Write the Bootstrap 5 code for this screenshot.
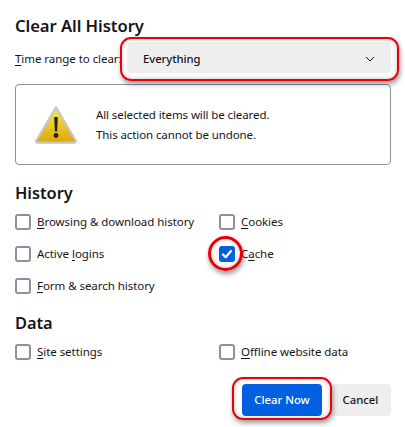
<!DOCTYPE html>
<html lang="en">
<head>
<meta charset="utf-8">
<title>Clear All History</title>
<link rel="stylesheet" href="https://cdn.jsdelivr.net/npm/bootstrap@5.3.0/dist/css/bootstrap.min.css">
<style>
html,body{background:#fff;overflow:hidden}
body{position:relative;width:405px;height:427px;font-family:"Noto Sans","Liberation Sans",sans-serif;font-size:11.5px;letter-spacing:-.05px;color:#15141a;line-height:16px}
u{text-underline-offset:2px;text-decoration-thickness:1px}
.dlg{padding:17px 14px 0 15px}
.dlg-title{font-size:16.6px;font-weight:600;line-height:18px;margin:0 0 7px}
.range-row{height:31px;margin-bottom:11px}
.range-label{width:112px;flex:none;white-space:nowrap;padding-top:2px}
.range-box{flex:1;height:31px;background:#eeeeef;border-radius:4px;padding:2px 16px 0;font-weight:500;font-size:11.3px}
.warn-box{height:81px;border:1px solid #8f8f9d;border-radius:4px;padding-left:18px;gap:18px;margin-bottom:19px}
.warn-text{line-height:19.5px;letter-spacing:-.1px}
.sec-title{font-size:16.4px;font-weight:600;line-height:18px;margin:0 0 12px}
.opt-grid{display:grid;grid-template-columns:204px 1fr;grid-auto-rows:32px;margin-bottom:4px}
.opt{display:flex;align-items:center;gap:6px;height:16px;white-space:nowrap}
.opt input.form-check-input{width:16px;height:16px;margin:0;flex:none;border:2px solid #8f8f9d;border-radius:3px;background-color:#fff;box-shadow:none}
.opt input.form-check-input:checked{background-color:#0060df;border-color:#0060df;background-size:100%;background-origin:border-box;background-image:url("data:image/svg+xml,%3csvg xmlns='http://www.w3.org/2000/svg' viewBox='0 0 16 16'%3e%3cpath fill='none' stroke='%23fff' stroke-width='2.2' stroke-linecap='round' stroke-linejoin='round' d='M4 8.5l2.7 2.7L12 5'/%3e%3c/svg%3e")}
.opt label{margin:0}
.data-grid{margin-bottom:16px;grid-auto-rows:24px}
.act{gap:8px}
.btn-clear,.btn-cancel{height:32px;border:0;border-radius:4px;font-size:11.3px;padding:0;line-height:32px;font-weight:500}
.btn-clear{width:80px;background:#0060df;color:#fff}
.btn-cancel{width:61px;background:#eeeeef;color:#15141a}
.ring{position:absolute;border:2px solid #e8000b;box-shadow:1px 3px 5px rgba(0,0,0,.4),inset 0 0 4px rgba(0,0,0,.25);pointer-events:none}
.ring-range{left:120px;top:37px;width:279px;height:44px;border-radius:11px}
.ring-check{left:208px;top:236px;width:35px;height:35px;border-width:3px;border-radius:50%}
.ring-btn{left:232px;top:377px;width:100px;height:43px;border-radius:11px}
</style>
</head>
<body>
<div class="dlg">
  <h1 class="dlg-title">Clear All History</h1>
  <div class="range-row d-flex align-items-center">
    <div class="range-label"><u>T</u>ime range to clear:</div>
    <div class="range-box d-flex align-items-center justify-content-between">
      <span>Everything</span>
      <svg width="10" height="6" viewBox="0 0 10 6" fill="none" stroke="#15141a" stroke-width="1"><path d="M1 1l4 4 4-4"/></svg>
    </div>
  </div>
  <div class="warn-box d-flex align-items-center">
    <svg width="44" height="40" viewBox="0 0 44 40">
      <defs><linearGradient id="wg" x1="0" y1="0" x2="0" y2="1"><stop offset="0" stop-color="#fbe94a"/><stop offset="1" stop-color="#dca70c"/></linearGradient></defs>
      <path d="M22 2.5L41.5 35.5a1.4 1.4 0 0 1-1.2 2.1H3.7a1.4 1.4 0 0 1-1.2-2.1Z" fill="url(#wg)" stroke="#c6c6c0" stroke-width="2.4" stroke-linejoin="round"/>
      <path d="M20.2 12h3.6l-.7 14.5h-2.2Z" fill="#222"/>
      <circle cx="22" cy="30.5" r="2.4" fill="#222"/>
    </svg>
    <div class="warn-text">All selected items will be cleared.<br>This action cannot be undone.</div>
  </div>
  <h2 class="sec-title">History</h2>
  <div class="opt-grid">
    <div class="opt"><input class="form-check-input" type="checkbox" id="c1"><label for="c1"><u>B</u>rowsing &amp; download history</label></div>
    <div class="opt"><input class="form-check-input" type="checkbox" id="c2"><label for="c2"><u>C</u>ookies</label></div>
    <div class="opt"><input class="form-check-input" type="checkbox" id="c3"><label for="c3">Active <u>l</u>ogins</label></div>
    <div class="opt"><input class="form-check-input" type="checkbox" id="c4" checked><label for="c4">C<u>a</u>che</label></div>
    <div class="opt"><input class="form-check-input" type="checkbox" id="c5"><label for="c5"><u>F</u>orm &amp; search history</label></div>
  </div>
  <h2 class="sec-title">Data</h2>
  <div class="opt-grid data-grid">
    <div class="opt"><input class="form-check-input" type="checkbox" id="c6"><label for="c6"><u>S</u>ite settings</label></div>
    <div class="opt"><input class="form-check-input" type="checkbox" id="c7"><label for="c7"><u>O</u>ffline website data</label></div>
  </div>
  <div class="act d-flex justify-content-end">
    <button class="btn btn-clear" type="button">Clear Now</button>
    <button class="btn btn-cancel" type="button">Cancel</button>
  </div>
</div>
<div class="ring ring-range"></div>
<div class="ring ring-check"></div>
<div class="ring ring-btn"></div>
</body>
</html>
